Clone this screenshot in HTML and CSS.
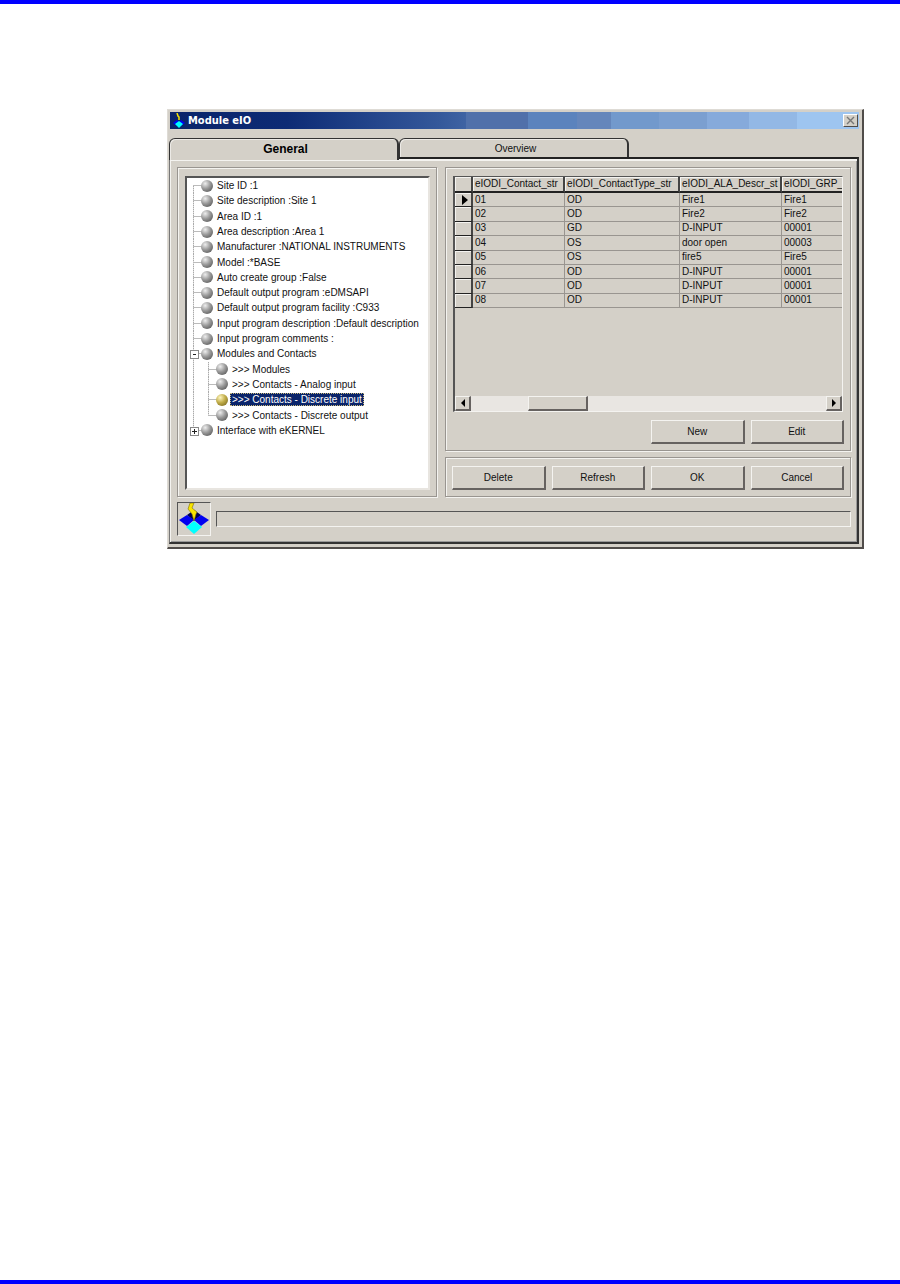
FILE: index.html
```html
<!DOCTYPE html>
<html lang="en">
<head>
    <meta charset="UTF-8">
    <meta name="viewport" content="width=device-width, initial-scale=1.0">
    <title>Module eIO</title>
    <link rel="stylesheet" href="styles.css">
</head>
<body>
    <main class="window">
        <header class="title-bar">
            <svg class="title-icon" viewBox="0 0 12 15">
                <path d="M0 10l4-3 3 3-3 3zM12 10l-4-3-3 3 3 3z" fill="#0000f0"/>
                <path d="M6 8l4 3-4 4-4-4z" fill="#00ffff"/>
                <path d="M4 0l1 3 1 1 0 3" fill="none" stroke="#f8e400" stroke-width="1.5"/>
            </svg>
            <h1>Module eIO</h1>
            <button class="close" aria-label="Close">
                <svg viewBox="0 0 9 9"><path d="M1 1l7 7M8 1l-7 7" stroke="#777" stroke-width="1.4"/></svg>
            </button>
        </header>

        <div class="tabs">
            <button class="tab active">General</button>
            <button class="tab">Overview</button>
        </div>

        <section class="page">
            <div class="panels">
                <div class="group tree-group">
                    <div class="tree">
                        <ul>
                            <li>Site ID :1</li>
                            <li>Site description :Site 1</li>
                            <li>Area ID :1</li>
                            <li>Area description :Area 1</li>
                            <li>Manufacturer :NATIONAL INSTRUMENTS</li>
                            <li>Model :*BASE</li>
                            <li>Auto create group :False</li>
                            <li>Default output program :eDMSAPI</li>
                            <li>Default output program facility :C933</li>
                            <li>Input program description :Default description</li>
                            <li>Input program comments :</li>
                            <li class="node open">Modules and Contacts</li>
                            <li class="child">&gt;&gt;&gt; Modules</li>
                            <li class="child">&gt;&gt;&gt; Contacts - Analog input</li>
                            <li class="child selected"><span>&gt;&gt;&gt; Contacts - Discrete input</span></li>
                            <li class="child last">&gt;&gt;&gt; Contacts - Discrete output</li>
                            <li class="node last">Interface with eKERNEL</li>
                        </ul>
                    </div>
                </div>

                <div class="side">
                    <div class="group">
                        <div class="grid">
                            <table>
                                <colgroup>
                                    <col class="col-mark"><col class="col-contact"><col class="col-type"><col class="col-descr"><col>
                                </colgroup>
                                <thead>
                                    <tr><th></th><th>eIODI_Contact_str</th><th>eIODI_ContactType_str</th><th>eIODI_ALA_Descr_st</th><th>eIODI_GRP_</th></tr>
                                </thead>
                                <tbody>
                                    <tr><th><svg class="marker" viewBox="0 0 6 10"><path d="M0 0l6 5-6 5z"/></svg></th><td>01</td><td>OD</td><td>Fire1</td><td>Fire1</td></tr>
                                    <tr><th></th><td>02</td><td>OD</td><td>Fire2</td><td>Fire2</td></tr>
                                    <tr><th></th><td>03</td><td>GD</td><td>D-INPUT</td><td>00001</td></tr>
                                    <tr><th></th><td>04</td><td>OS</td><td>door open</td><td>00003</td></tr>
                                    <tr><th></th><td>05</td><td>OS</td><td>fire5</td><td>Fire5</td></tr>
                                    <tr><th></th><td>06</td><td>OD</td><td>D-INPUT</td><td>00001</td></tr>
                                    <tr><th></th><td>07</td><td>OD</td><td>D-INPUT</td><td>00001</td></tr>
                                    <tr><th></th><td>08</td><td>OD</td><td>D-INPUT</td><td>00001</td></tr>
                                </tbody>
                            </table>
                            <div class="scrollbar">
                                <button aria-label="Scroll left"><svg viewBox="0 0 4 8"><path d="M4 0v8L0 4z"/></svg></button>
                                <div class="track"><div class="thumb"></div></div>
                                <button aria-label="Scroll right"><svg viewBox="0 0 4 8"><path d="M0 0v8l4-4z"/></svg></button>
                            </div>
                        </div>
                        <div class="buttons">
                            <button class="btn btn-new">New</button>
                            <button class="btn">Edit</button>
                        </div>
                    </div>
                    <div class="group">
                        <div class="buttons">
                            <button class="btn">Delete</button>
                            <button class="btn">Refresh</button>
                            <button class="btn">OK</button>
                            <button class="btn">Cancel</button>
                        </div>
                    </div>
                </div>
            </div>

            <footer class="status">
                <div class="status-icon">
                    <svg viewBox="0 0 30 32">
                        <path d="M15 7l7 5-7 6-7-6z" fill="#000050"/>
                        <path d="M8 12l7 5-7 6-8-6z" fill="#0000f0"/>
                        <path d="M22 12l8 5-8 6-7-6z" fill="#0000f0"/>
                        <path d="M15 18l8 6-8 7-8-7z" fill="#00ffff"/>
                        <path d="M11 0h4l-2 5 5 4-1 2-2 7-2-7-4-5z" fill="#f8e400" stroke="#807000" stroke-width=".6"/>
                    </svg>
                </div>
                <div class="status-bar"></div>
            </footer>
        </section>
    </main>
</body>
</html>
```
FILE: styles.css
```css
* {
    box-sizing: border-box;
}
body {
    margin: 0;
    min-height: 100vh;
    padding: 105px 36px 40px 167px;
    border-top: 4px solid #0000ff;
    border-bottom: 4px solid #0000ff;
    background: #fff;
    color: #111;
    font-family: "Liberation Sans", Arial, sans-serif;
    font-size: 10px;
    line-height: 13px;
}
button {
    font: inherit;
    color: inherit;
    background: #d4d0c8;
    padding: 0;
}
.window {
    background: #d4d0c8;
    border: 1px solid #dedbd5;
    border-right: 2px solid #504c4a;
    border-bottom: 2px solid #504c4a;
    padding: 2px 3px 3px 1px;
}
.title-bar {
    display: flex;
    align-items: center;
    height: 17px;
    margin-left: 1px;
    padding: 0 1px 0 3px;
    background: linear-gradient(90deg, #0a246a 0%, #0d2b75 17%, #24468c 30%, #34589a 39%, #3f63a3 43%, #5070aa 43%, #5070aa 52%, #5b83bd 52%, #5b83bd 59%, #6586bb 59%, #6586bb 64%, #7299cc 64%, #7299cc 71%, #7b9fd0 71%, #7b9fd0 78%, #86aadb 78%, #86aadb 84%, #93b8e5 84%, #93b8e5 91%, #9ec5f0 91%);
}
.title-bar h1 {
    flex: 1;
    margin: 0 0 0 3px;
    font-family: "DejaVu Sans Condensed", "DejaVu Sans", sans-serif;
    font-size: 11px;
    font-weight: bold;
    color: #fff;
}
.title-icon {
    width: 12px;
    height: 15px;
}
.close {
    display: flex;
    align-items: center;
    justify-content: center;
    width: 15px;
    height: 13px;
    border: 1px solid #fff;
    border-right-color: #504c4a;
    border-bottom-color: #504c4a;
}
.close svg {
    width: 9px;
    height: 9px;
}

/* Tabs */
.tabs {
    display: flex;
    margin-top: 9px;
}
.tab {
    width: 230px;
    height: 19px;
    padding-left: 4px;
    border: 1px solid #333;
    border-right-width: 2px;
    border-bottom: 0;
    border-radius: 6px 6px 0 0;
    box-shadow: inset 1px 1px 0 #eceae6;
}
.tab.active {
    position: relative;
    height: 22px;
    margin-bottom: -3px;
    font-size: 12px;
    font-weight: bold;
    color: #000;
}
.page {
    border: 1px solid #777;
    border-top: 2px solid #222;
    border-right: 2px solid #333;
    border-bottom: 2px solid #333;
    box-shadow: inset 1px 2px 0 #f4f3f0, inset -1px -1px 0 #999;
    padding: 8px 6px 6px 7px;
}

/* Group boxes */
.panels {
    display: flex;
    gap: 8px;
}
.group {
    border: 1px solid #999590;
    box-shadow: inset 1px 1px 0 #f4f3f0, 1px 1px 0 #f4f3f0;
    padding: 8px 6px 6px;
}
.tree-group {
    display: flex;
    flex: 0 0 260px;
    min-width: 0;
}
.side {
    display: flex;
    flex: 1;
    flex-direction: column;
    gap: 6px;
    min-width: 0;
}
.tree {
    flex: 1;
    min-width: 0;
    margin-left: 1px;
    background: #fff;
    border: 2px solid #555;
    border-right-color: #e8e5e0;
    border-bottom-color: #e8e5e0;
}
.tree ul {
    display: grid;
    grid-auto-rows: 1fr;
    height: 260px;
    margin: 0;
    padding: 0;
    list-style: none;
}
.tree li {
    position: relative;
    display: flex;
    align-items: center;
    padding-left: 14px;
    white-space: nowrap;
    background:
        linear-gradient(#bbb, #bbb) 6px 50% / 10px 1px no-repeat,
        repeating-linear-gradient(#aaa 0 1px, #ddd 1px 2px) 6px 0 / 1px 100% no-repeat;
}
.tree li:first-child {
    background-position: 6px 50%, 6px 8px;
}
.tree li::before {
    content: "";
    width: 12px;
    height: 12px;
    margin-right: 4px;
    border-radius: 50%;
    background: radial-gradient(circle at 35% 30%, #eee 0, #999 45%, #444 100%);
}
.tree li.child {
    padding-left: 29px;
    background:
        linear-gradient(#bbb, #bbb) 21px 50% / 10px 1px no-repeat,
        repeating-linear-gradient(#aaa 0 1px, #ddd 1px 2px) 21px 0 / 1px 100% no-repeat,
        repeating-linear-gradient(#aaa 0 1px, #ddd 1px 2px) 6px 0 / 1px 100% no-repeat;
}
.tree li.child.last {
    background-size: 10px 1px, 1px 50%, 1px 100%;
}
.tree li.node.last {
    background-size: 10px 1px, 1px 50%;
}
.tree li.selected::before {
    background: radial-gradient(circle at 35% 30%, #fff6c0 0, #c0ac48 45%, #6a5a18 100%);
}
.selected span {
    margin-left: -2px;
    padding: 0 2px;
    background: #0a246a;
    color: #fff;
    outline: 1px dotted #c8b878;
    outline-offset: -1px;
}
/* Expander boxes */
.tree .node::after {
    content: "";
    position: absolute;
    left: 3px;
    top: 4px;
    width: 7px;
    height: 7px;
    border: 1px solid #888;
    background: linear-gradient(#222, #222) 50% 50% / 3px 1px no-repeat, #fff;
}
.tree .node.last::after {
    background: linear-gradient(#222, #222) 50% 50% / 5px 1px no-repeat, linear-gradient(#222, #222) 50% 50% / 1px 5px no-repeat, #fff;
}

/* Data grid */
.grid {
    display: flex;
    flex-direction: column;
    justify-content: space-between;
    height: 236px;
    margin: 0 1px;
    border: 1px solid #f4f3f0;
    border-top: 1px solid #555;
    border-left: 2px solid #555;
    overflow: hidden;
}
table {
    width: 100%;
    height: 131px;
    table-layout: fixed;
    border-collapse: separate;
    border-spacing: 0;
}
.col-mark { width: 18px; }
.col-contact { width: 92px; }
.col-type { width: 115px; }
.col-descr { width: 102px; }
th, td {
    padding: 0 0 0 2px;
    border-right: 1px solid #999590;
    border-bottom: 1px solid #999590;
    font-weight: normal;
    line-height: 12px;
    text-align: left;
    white-space: nowrap;
}
th {
    border-right: 2px solid #444;
    border-bottom: 1px solid #222;
    box-shadow: inset 1px 1px 0 #f4f3f0;
}
thead th {
    height: 16px;
    border-bottom-width: 2px;
}
th:last-child, td:last-child {
    border-right: 0;
}
.marker {
    display: block;
    width: 6px;
    height: 10px;
    margin-left: 5px;
}
.scrollbar {
    display: flex;
    height: 15px;
    background: #e9e6e2;
}
.scrollbar button, .thumb {
    background: #d4d0c8;
    border: 1px solid #f4f3f0;
    border-right: 2px solid #666260;
    border-bottom: 2px solid #666260;
}
.scrollbar button {
    display: flex;
    align-items: center;
    justify-content: center;
    width: 16px;
}
.scrollbar svg {
    width: 4px;
    height: 8px;
}
.track {
    flex: 1;
}
.thumb {
    width: 60px;
    height: 100%;
    margin-left: 16%;
}

/* Buttons */
.buttons {
    display: grid;
    grid-template-columns: repeat(4, 1fr);
    gap: 6px;
}
.grid + .buttons {
    margin-top: 8px;
}
.btn {
    height: 24px;
    border: 1px solid #f4f3f0;
    border-right: 2px solid #666260;
    border-bottom: 2px solid #666260;
}
.btn-new {
    grid-column: 3;
}

/* Status bar */
.status {
    display: flex;
    align-items: center;
    gap: 5px;
    margin-top: 5px;
}
.status-icon {
    width: 34px;
    height: 34px;
    padding: 0 1px;
    border: 1px solid #f4f3f0;
    border-top-color: #555;
    border-left-color: #555;
}
.status-icon svg {
    display: block;
    width: 30px;
    height: 32px;
}
.status-bar {
    flex: 1;
    height: 16px;
    border: 1px solid #f4f3f0;
    border-top-color: #555;
    border-left-color: #555;
}
```
